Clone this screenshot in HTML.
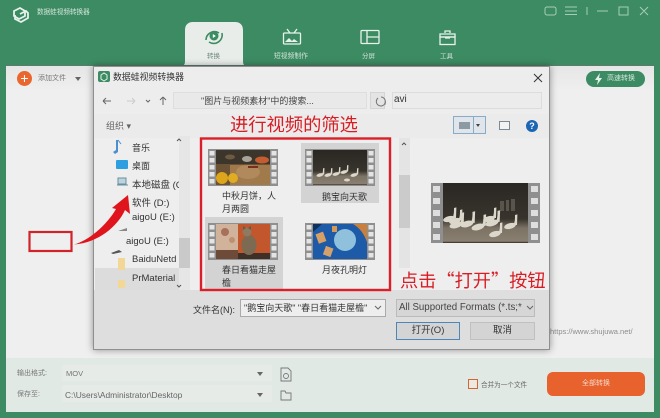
<!DOCTYPE html>
<html><head><meta charset="utf-8">
<style>
html,body{margin:0;padding:0}
body{width:660px;height:418px;overflow:hidden;position:relative;background:#3c8b63}
#w{position:absolute;left:0;top:0;width:660px;height:418px;overflow:hidden;background:#3c8b63;font-family:"Liberation Sans","Noto Sans CJK SC",sans-serif;color:#333;filter:blur(.35px)}
.a{position:absolute;white-space:nowrap}
svg{position:absolute;overflow:visible}
.r{font-family:"Noto Sans CJK SC",sans-serif;color:#d81e25;font-weight:400}
</style></head><body><div id="w">
<!-- header -->
<svg style="left:0;top:0" width="660" height="66">
<g fill="none" stroke="#e8f2ec" stroke-width="1.800"><path d="M14 11l6-3 5 3v5l-6 3-5-3z"/><path d="M20 14l6-3 2 2v5l-7 4-6-3v-4"/></g>
<path d="M182 66c3-1 3-3 3-6V30c0-5 3-8 8-8h42c5 0 8 3 8 8v30c0 3 0 5 3 6z" fill="#e9edea"/>
<g fill="none" stroke="#3c8b63" stroke-width="1.600"><path d="M206 40a8.500 8.500 0 0 1 13-7"/><path d="M222 33a8.500 8.500 0 0 1-13 9"/></g><circle cx="214" cy="36" r="4.500" fill="#3c8b63"/><path d="M212.800 34l3 2-3 2z" fill="#fff"/>
<g fill="none" stroke="#e8f2ec" stroke-width="1.300"><rect x="283.500" y="33" width="17" height="11" rx="1"/><path d="M287 29l3 4M297 29l-3 4"/><rect x="361" y="30.500" width="18" height="13" rx="1"/><path d="M367 31v12M367 37h12"/><rect x="440" y="37" width="15" height="7.500"/><path d="M440 37h15v-3h-15zM445 33v-2h5v2M445 38h5"/></g>
<path d="M285 42l4-4 3 3 2-2 4 3z" fill="#e8f2ec"/>
<g fill="none" stroke="#a6cdb7" stroke-width="1"><rect x="545" y="7" width="11" height="8" rx="2"/><path d="M565 7h12M565 11h12M565 14.500h12M587 7v8M597 11h11M619 7h9v8h-9zM640 7l8 8M648 7l-8 8"/></g>
</svg>
<div class="a" style="left:37px;top:6px;font-size:6.600px;color:#d5e6dc">数据蛙视频转换器</div>
<div class="a" style="left:207px;top:50px;font-size:6.500px;color:#6c8a79">转换</div>
<div class="a" style="left:274px;top:50px;font-size:6.800px;color:#cfe2d7">短视频制作</div>
<div class="a" style="left:362px;top:50px;font-size:6.500px;color:#cfe2d7">分屏</div>
<div class="a" style="left:440px;top:50px;font-size:6.500px;color:#cfe2d7">工具</div>
<!-- panel -->
<div class="a" style="left:6px;top:65px;width:648px;height:347px;background:#eeefee;border-top:1px solid #5d7b6b;box-sizing:border-box"></div>
<div class="a" style="left:6px;top:358px;width:648px;height:54px;background:#e1e9e5"></div>
<div class="a" style="left:6px;top:66px;width:648px;height:24px;background:linear-gradient(#e6e6e6,#eeefee)"></div>
<div class="a" style="left:17px;top:71px;width:15px;height:15px;border-radius:50%;background:#e9672f;color:#fff;font-size:14px;line-height:14px;text-align:center">+</div>
<div class="a" style="left:38px;top:73px;font-size:7px;color:#777">添加文件</div>
<div class="a" style="left:75px;top:77px;width:0;height:0;border:3px solid transparent;border-top:4px solid #666"></div>
<div class="a" style="left:586px;top:71px;width:59px;height:16px;border-radius:8px;background:#3c8b63;color:#d5e6dc;font-size:7px;line-height:16px;text-indent:21px">高速转换</div>
<svg style="left:594px;top:73px" width="10" height="12"><path d="M6 0L1 7h3l-1 5 5-7H5z" fill="#e8f2ec"/></svg>
<div class="a" style="left:550px;top:327px;font-size:7.500px;color:#8c8c8c">https://www.shujuwa.net/</div>
<!-- bottom -->
<div class="a" style="left:17px;top:368px;font-size:7px;color:#777">输出格式:</div>
<div class="a" style="left:17px;top:389px;font-size:7px;color:#777">保存至:</div>
<div class="a" style="left:62px;top:365px;width:210px;height:16px;background:#e6ebe8"></div>
<div class="a" style="left:62px;top:385px;width:210px;height:17px;background:#e6ebe8"></div>
<div class="a" style="left:66px;top:369px;font-size:7.500px;color:#777">MOV</div>
<div class="a" style="left:65px;top:390px;font-size:8.400px;color:#666">C:\Users\Administrator\Desktop</div>
<div class="a" style="left:257px;top:372px;border:3px solid transparent;border-top:4px solid #666"></div>
<div class="a" style="left:257px;top:393px;border:3px solid transparent;border-top:4px solid #666"></div>
<svg style="left:280px;top:367px" width="12" height="36"><g fill="none" stroke="#777" stroke-width=".9"><path d="M1 1h7l3 3v10H1z"/><circle cx="6" cy="9" r="2.500"/><path d="M1 24h4l1 2h5v7H1z"/></g></svg>
<div class="a" style="left:468px;top:379px;width:8px;height:8px;border:1px solid #d4653b;background:#efe8df"></div>
<div class="a" style="left:481px;top:379px;font-size:6.600px;color:#666">合并为一个文件</div>
<div class="a" style="left:547px;top:372px;width:98px;height:24px;border-radius:6px;background:#e8622d;color:#f5d9cb;font-size:7px;line-height:24px;text-align:center">全部转换</div>
<!-- dialog -->
<div class="a" style="left:93px;top:66px;width:457px;height:284px;background:#dedede;box-shadow:0 0 7px rgba(0,0,0,.4);border:1px solid #8f8f8f;box-sizing:border-box"></div>
<div class="a" style="left:94px;top:67px;width:455px;height:47px;background:#ededed"></div>
<div class="a" style="left:94px;top:114px;width:455px;height:24px;background:#ebebeb"></div>
<div class="a" style="left:94px;top:138px;width:455px;height:152px;background:#eeeeee"></div>
<div class="a" style="left:98px;top:71px;width:12px;height:11px;background:#3c8b63;border-radius:2px"></div>
<div class="a" style="left:113px;top:70px;font-size:8.900px;color:#333">数据蛙视频转换器</div>
<svg style="left:98px;top:70px" width="460" height="70">
<path d="M3 5l3-2 3 2v4l-3 2-3-2z" fill="none" stroke="#e3f0e8"/>
<path d="M436 4l8 8M444 4l-8 8" stroke="#333" fill="none"/>
<g stroke="#666" fill="none"><path d="M5 31h8M5 31l3-3M5 31l3 3"/><path d="M29 31h8M37 31l-3-3M37 31l-3 3" stroke="#ccc"/><path d="M48 30l2 2 2-2"/><path d="M65 35v-8M65 27l-3 3M65 27l3 3"/></g>
<path d="M80 26h7v9h-7z" fill="#4a90cf"/>
<path d="M94 29l2 2-2 2M222 29l2 2-2 2M261 29l3 3 3-3" stroke="#666" fill="none"/>
<path d="M283 28a4.500 4.500 0 1 1-3 1" stroke="#777" fill="none"/>
<path d="M436 27l5 5M441 27l-5 5" stroke="#444" fill="none" stroke-width="1.300"/>
</svg>
<div class="a" style="left:173px;top:92px;width:194px;height:17px;background:#e9e9e9;border:1px solid #dedede;box-sizing:border-box"></div>
<div class="a" style="left:370px;top:92px;width:15px;height:17px;background:#e4e4e4;border:1px solid #d4d4d4;box-sizing:border-box"></div>
<div class="a" style="left:392px;top:92px;width:150px;height:17px;background:#ececec;border:1px solid #dcdcdc;box-sizing:border-box"></div>
<div class="a" style="left:201px;top:94px;font-size:9px;color:#444">"图片与视频素材"中的搜索...</div>
<svg style="left:0;top:0" width="660" height="140"><path d="M381 97a4.500 4.500 0 1 1-3 1" stroke="#777" fill="none"/></svg>
<div class="a" style="left:394px;top:94px;font-size:10px;color:#333">avi</div>
<div class="a" style="left:106px;top:119px;font-size:9px;color:#666">组织 ▾</div>
<div class="a" style="left:453px;top:116px;width:33px;height:18px;background:#dfe5ea;border:1px solid #8aabc6;box-sizing:border-box"></div>
<div class="a" style="left:473px;top:116px;width:1px;height:18px;background:#8aabc6"></div>
<div class="a" style="left:459px;top:122px;width:11px;height:7px;background:#8c9aa3"></div>
<div class="a" style="left:476px;top:124px;border:2.500px solid transparent;border-top:3px solid #444"></div>
<div class="a" style="left:499px;top:121px;width:11px;height:9px;border:1px solid #7a8b97;box-sizing:border-box;background:#f3f3f3"></div>
<div class="a" style="left:526px;top:120px;width:12px;height:12px;border-radius:50%;background:#1c66b4;color:#fff;font-size:9px;font-weight:bold;line-height:12px;text-align:center">?</div>
<!-- nav -->
<div class="a" style="left:95px;top:268px;width:84px;height:22px;background:#dcdcdc"></div>
<div class="a" style="left:179px;top:136px;width:11px;height:154px;background:#e6e6e6"></div>
<div class="a" style="left:179px;top:238px;width:11px;height:30px;background:#c9c9c9"></div>
<svg style="left:110px;top:138px" width="80" height="150">
<path d="M8 2v12l-3 2-2-2 3-2V2z" fill="#4a8fd0"/><path d="M8 2l3 4" stroke="#4a8fd0" fill="none"/>
<rect x="6" y="22" width="12" height="9" rx="1" fill="#2d9ee0"/>
<path d="M8 40h8v6H8zM7 47h11" stroke="#6a8f9d" fill="#bcd4df"/>
<path d="M8 93l9-3v3z" fill="#888"/><path d="M1 115l8-3 3 2-9 2z" fill="#555"/>
<rect x="8" y="120" width="7" height="12" fill="#f2d796"/><rect x="8" y="142" width="7" height="8" fill="#f2d796"/>
<path d="M68 2l2-2 2 2M68 146l2 2 2-2" transform="translate(-1 1)" stroke="#555" fill="none"/>
</svg>
<div class="a" style="left:132px;top:141px;font-size:9px;color:#333">音乐</div>
<div class="a" style="left:132px;top:159px;font-size:9px;color:#333">桌面</div>
<div class="a" style="left:132px;top:177px;font-size:9.500px;color:#333;width:47px;overflow:hidden">本地磁盘 (C</div>
<div class="a" style="left:132px;top:195px;font-size:9.500px;color:#333">软件 (D:)</div>
<div class="a" style="left:132px;top:212px;font-size:9.500px;color:#333">aigoU (E:)</div>
<div class="a" style="left:126px;top:236px;font-size:9.500px;color:#333">aigoU (E:)</div>
<div class="a" style="left:132px;top:254px;font-size:9.500px;color:#333;width:47px;overflow:hidden">BaiduNetd</div>
<div class="a" style="left:132px;top:273px;font-size:9.500px;color:#333;width:47px;overflow:hidden">PrMaterial</div>
<!-- selected files -->
<div class="a" style="left:205px;top:217px;width:78px;height:73px;background:#d3d3d3"></div>
<div class="a" style="left:301px;top:143px;width:78px;height:60px;background:#d3d3d3"></div>
<svg style="left:0;top:0" width="660" height="418">
<defs>
<g id="fs"><rect x="0" y="0" width="70" height="37" fill="#8f8f8f"/>
<g fill="#e4e4e4"><rect x="1.500" y="2" width="5" height="4.500"/><rect x="1.500" y="9" width="5" height="4.500"/><rect x="1.500" y="16" width="5" height="4.500"/><rect x="1.500" y="23" width="5" height="4.500"/><rect x="1.500" y="30" width="5" height="4.500"/><rect x="63.500" y="2" width="5" height="4.500"/><rect x="63.500" y="9" width="5" height="4.500"/><rect x="63.500" y="16" width="5" height="4.500"/><rect x="63.500" y="23" width="5" height="4.500"/><rect x="63.500" y="30" width="5" height="4.500"/></g></g>
<linearGradient id="gs" x1="0" y1="0" x2="0" y2="1"><stop offset="0" stop-color="#2a2622"/><stop offset=".6" stop-color="#38342d"/><stop offset=".75" stop-color="#7c7365"/><stop offset=".97" stop-color="#8a7f70"/><stop offset="1" stop-color="#2a2622"/></linearGradient>
<g id="goose" fill="#dcd7cb"><ellipse cx="0" cy="0" rx="6" ry="2.800" transform="rotate(-15)"/><path d="M3-1C5-3 5-7 5-11l2.400-.6L7-1z"/></g>
</defs>
<!-- mooncake -->
<use href="#fs" x="208" y="149"/>
<rect x="216" y="150" width="54" height="35" fill="#6b5234"/>
<rect x="216" y="150" width="54" height="14" fill="#3b352c"/>
<rect x="230" y="165" width="40" height="20" fill="#a17a4c"/>
<ellipse cx="248" cy="172" rx="12" ry="7" fill="#b08a5c"/><ellipse cx="222" cy="178" rx="6" ry="6" fill="#dda51b"/><ellipse cx="233" cy="178" rx="5" ry="5" fill="#e0ac22"/><ellipse cx="262" cy="160" rx="7" ry="3.500" fill="#c45c30"/><ellipse cx="247" cy="159" rx="5" ry="3" fill="#a9a39a"/><ellipse cx="230" cy="157" rx="5" ry="2.500" fill="#6d5a43"/><rect x="248" y="166" width="10" height="2" fill="#7a2f1d"/>
<!-- geese -->
<use href="#fs" x="305" y="149"/>
<rect x="313" y="150" width="54" height="35" fill="url(#gs)"/>
<g transform="translate(320 175) scale(.6)"><use href="#goose"/></g><g transform="translate(328 175) scale(.6)"><use href="#goose"/></g><g transform="translate(336 174) scale(.6)"><use href="#goose"/></g><g transform="translate(344 172) scale(.6)"><use href="#goose"/></g><g transform="translate(354 175) scale(.6)"><use href="#goose"/></g><ellipse cx="347" cy="180" rx="3" ry="1.500" fill="#dcd7cb"/>
<!-- cat -->
<use href="#fs" x="208" y="223"/>
<rect x="216" y="224" width="54" height="35" fill="#c2562c"/>
<rect x="216" y="224" width="22" height="35" fill="#d0b39a"/>
<circle cx="225" cy="232" r="4" fill="#a8705a"/><circle cx="232" cy="240" r="3" fill="#bf8f73"/><rect x="216" y="250" width="22" height="9" fill="#6e4a38"/>
<rect x="238" y="253" width="32" height="6" fill="#3e3026"/>
<ellipse cx="249" cy="245" rx="7.500" ry="10" fill="#7d6a52"/><circle cx="247" cy="232" r="4.500" fill="#8d7a60"/><path d="M243 230l0-4 3 2zM251 230l0-4-3 2z" fill="#6d5a44"/>
<!-- moon -->
<use href="#fs" x="305" y="223"/>
<rect x="313" y="224" width="54" height="35" fill="#1d5aa8"/>
<circle cx="345" cy="240" r="11" fill="#8fc1dc"/>
<path d="M353 224h14v18C364 234 360 228 353 224z" fill="#c8803c"/>
<path d="M313 224h9l-9 8z" fill="#0f2f5c"/>
<rect x="317" y="233" width="8" height="10" fill="#d9a066" transform="rotate(-20 320 238)"/><rect x="324" y="247" width="8" height="9" fill="#d3a26c" transform="rotate(20 328 252)"/><rect x="332" y="226" width="5" height="6" fill="#d59858"/>
<!-- preview -->
<rect x="431" y="183" width="109" height="60" fill="#8f8f8f"/>
<rect x="443" y="183" width="85" height="60" fill="url(#gs)"/>
<g fill="#dedede"><rect x="433" y="186" width="7" height="6"/><rect x="433" y="198" width="7" height="6"/><rect x="433" y="210" width="7" height="6"/><rect x="433" y="222" width="7" height="6"/><rect x="433" y="234" width="7" height="6"/><rect x="531" y="186" width="7" height="6"/><rect x="531" y="198" width="7" height="6"/><rect x="531" y="210" width="7" height="6"/><rect x="531" y="222" width="7" height="6"/><rect x="531" y="234" width="7" height="6"/></g>
<g fill="#5a554c"><rect x="500" y="201" width="4" height="10"/><rect x="506" y="200" width="3" height="11"/><rect x="511" y="199" width="4" height="12"/></g>
<g transform="translate(449 219)"><use href="#goose"/></g><g transform="translate(455 221)"><use href="#goose"/></g><g transform="translate(456 225) scale(1.100)"><use href="#goose"/></g><g transform="translate(467 224) scale(1.100)"><use href="#goose"/></g><g transform="translate(478 227) scale(1.100)"><use href="#goose"/></g><g transform="translate(489 219)"><use href="#goose"/></g><g transform="translate(492 223) scale(1.100)"><use href="#goose"/></g><g transform="translate(510 226)"><use href="#goose"/></g><g transform="translate(495 234)"><use href="#goose"/></g>
<!-- scroll -->
<rect x="399" y="138" width="11" height="130" fill="#e4e4e4"/><rect x="399" y="175" width="11" height="53" fill="#cbcbcb"/>
<path d="M402 145l2-2 2 2" stroke="#555" fill="none"/>
<!-- red annotations -->
<rect x="201" y="138.500" width="189" height="151.500" fill="none" stroke="#dc1f26" stroke-width="2.400"/>
<rect x="29.500" y="232" width="42" height="19" fill="none" stroke="#d2232a" stroke-width="2.200"/>
<path d="M74 244.500C88 241 107 225 116 209L112 208 128 195 130 214 125 210C118 226 98 243 74 244.500z" fill="#e0141c"/>
</svg>
<div class="a r" style="left:230px;top:112px;font-size:18.300px;line-height:24px">进行视频的筛选</div>
<div class="a r" style="left:400px;top:268px;font-size:18.200px;line-height:24px">点击“打开”按钮</div>
<div class="a" style="left:222px;top:190px;font-size:9px;line-height:12.500px;color:#333;width:56px;white-space:normal">中秋月饼，人月两圆</div>
<div class="a" style="left:322px;top:190px;font-size:9px;color:#333">鹅宝向天歌</div>
<div class="a" style="left:222px;top:264px;font-size:9px;line-height:12.500px;color:#333;width:56px;white-space:normal">春日看猫走屋檐</div>
<div class="a" style="left:322px;top:263px;font-size:9px;color:#333">月夜孔明灯</div>
<!-- footer -->
<div class="a" style="left:193px;top:303px;font-size:9px;color:#333">文件名(N):</div>
<div class="a" style="left:240px;top:299px;width:146px;height:18px;background:#eee;border:1px solid #aaa;box-sizing:border-box;font-size:9px;line-height:16px;padding-left:3px;color:#333;overflow:hidden">"鹅宝向天歌" "春日看猫走屋檐"</div>
<div class="a" style="left:396px;top:299px;width:139px;height:18px;background:#d6d6d6;border:1px solid #bbb;box-sizing:border-box;font-size:9.700px;line-height:16px;padding-left:2px;color:#444;overflow:hidden">All Supported Formats (*.ts;*</div>
<svg style="left:0;top:0" width="660" height="418"><path d="M375 306l3 3 3-3M527 306l3 3 3-3" stroke="#666" fill="none"/></svg>
<div class="a" style="left:396px;top:322px;width:64px;height:18px;background:#d4d4d4;border:1.500px solid #4d86b8;box-sizing:border-box;font-size:9.500px;line-height:15px;text-align:center;color:#333">打开(O)</div>
<div class="a" style="left:470px;top:322px;width:65px;height:18px;background:#d4d4d4;border:1px solid #c0c0c0;box-sizing:border-box;font-size:9.500px;line-height:16px;text-align:center;color:#333">取消</div>
</div></body></html>
